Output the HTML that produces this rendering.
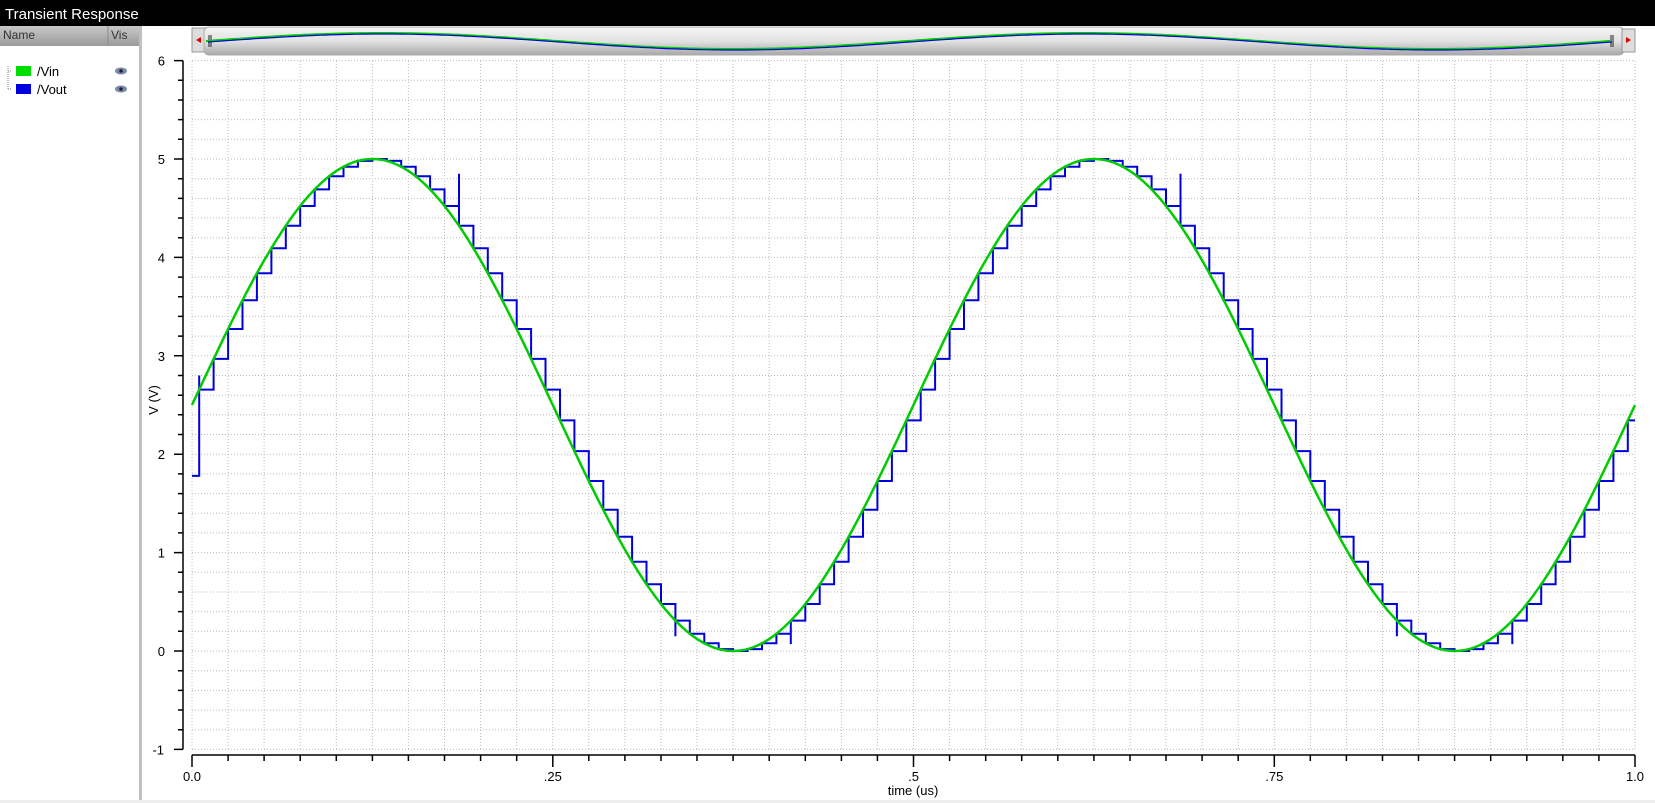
<!DOCTYPE html>
<html><head><meta charset="utf-8"><style>
html,body{margin:0;padding:0;background:#fff;overflow:hidden}
svg{display:block}
text{font-family:"Liberation Sans",sans-serif}
</style></head><body>
<svg id="s" width="1655" height="803" viewBox="0 0 1655 803" xmlns="http://www.w3.org/2000/svg">
<defs>
<linearGradient id="hg" x1="0" y1="0" x2="0" y2="1"><stop offset="0" stop-color="#c8c8c8"/><stop offset="1" stop-color="#9a9a9a"/></linearGradient>
<linearGradient id="sb" x1="0" y1="0" x2="0" y2="1"><stop offset="0" stop-color="#f4f4f4"/><stop offset="0.5" stop-color="#e2e2e2"/><stop offset="1" stop-color="#a8a8a8"/></linearGradient>
</defs>
<rect width="1655" height="803" fill="#fff"/>
<rect width="1655" height="26" fill="#000"/>
<text x="5" y="19" fill="#fff" font-size="15">Transient Response</text>
<!-- left panel -->
<rect x="0" y="26" width="139" height="20" fill="url(#hg)"/>
<line x1="108" y1="26" x2="108" y2="46" stroke="#888"/>
<text x="3" y="39" font-size="12" fill="#333">Name</text>
<text x="111" y="39" font-size="12" fill="#333">Vis</text>
<rect x="139" y="26" width="3" height="774" fill="#c0c0c0"/>
<path d="M8 66 V89 M8 71 H12 M8 89 H12" stroke="#888" stroke-dasharray="1,1" fill="none"/>
<rect x="16" y="66" width="15" height="10" fill="#00dd00"/>
<rect x="16" y="84" width="15" height="10" fill="#0000dd"/>
<text x="37" y="76" font-size="13">/Vin</text>
<text x="37" y="94" font-size="13">/Vout</text>
<g fill="#7a8aa8"><ellipse cx="121" cy="71" rx="6" ry="3.5"/><ellipse cx="121" cy="89" rx="6" ry="3.5"/></g>
<g fill="#223"><circle cx="121" cy="71" r="1.8"/><circle cx="121" cy="89" r="1.8"/></g>
<rect x="0" y="800" width="1655" height="3" fill="#eee"/>
<!-- scrollbar -->
<rect x="192" y="28" width="14" height="24" fill="#ddd" stroke="#999"/>
<path d="M196 40 L201 37 L201 43 Z" fill="#d00"/>
<rect x="204" y="27" width="1420" height="28" rx="5" fill="url(#sb)" stroke="#aaa"/>
<rect x="1622" y="29" width="13" height="23" fill="#ddd" stroke="#999"/>
<path d="M1631 40 L1626 37 L1626 43 Z" fill="#d00"/>
<path d="M209 35 V47 M211 35 V47 M1611 35 V47 M1613 35 V47" stroke="#222"/>
<g id="mini"></g>
<!-- grid -->
<g id="grid" stroke="#bbb" stroke-dasharray="1,2"></g>
<!-- axes -->
<g id="ax" stroke="#000" stroke-width="1.5" fill="none"></g>
<g id="lab" font-size="13"></g>
<text x="913" y="795" font-size="13" text-anchor="middle">time (us)</text>
<text transform="translate(158,400) rotate(-90)" font-size="13" text-anchor="middle">V (V)</text>
<path id="vout" fill="none" stroke="#0000dd" stroke-width="2"/>
<path id="vin" fill="none" stroke="#00cc00" stroke-width="2.5"/>
</svg>
<script>
var X0=192,X1=1635,Y0=651,PV=98.4;
function X(t){return X0+(X1-X0)*t}
function Y(v){return Y0-PV*v}
function vin(t){return 2.5+2.5*Math.sin(2*Math.PI*2*t)}
var g='',i;
for(i=0;i<=40;i++){var x=X(i/40).toFixed(1);g+='<line x1="'+x+'" y1="61" x2="'+x+'" y2="750"/>';}
for(i=0;i<=35;i++){var y=Y(-1+i*0.2).toFixed(1);g+='<line x1="192" y1="'+y+'" x2="1635" y2="'+y+'"/>';}
document.getElementById('grid').innerHTML=g;
var a='M183 '+Y(6)+' V'+Y(-1)+' M192 755 H1635 ';
for(i=0;i<=35;i++){var v=-1+i*0.2;var maj=Math.abs(v-Math.round(v))<1e-6;a+='M'+(maj?174:178)+' '+Y(v).toFixed(1)+' H183 ';}
for(i=0;i<=40;i++){var maj=i%10==0;a+='M'+X(i/40).toFixed(1)+' 755 V'+(maj?767:761)+' ';}
document.getElementById('ax').setAttribute('d',a);
document.getElementById('ax').innerHTML='<path d="'+a+'"/>';
var l='';
for(i=-1;i<=6;i++)l+='<text x="'+(i<0?164:165)+'" y="'+(Y(i)+5).toFixed(1)+'" text-anchor="end">'+i+'</text>';
var xl=['0.0','.25','.5','.75','1.0'];
for(i=0;i<5;i++)l+='<text x="'+X(i/4).toFixed(1)+'" y="781" text-anchor="middle">'+xl[i]+'</text>';
document.getElementById('lab').innerHTML=l;
var p='M'+X(0)+' '+Y(vin(0));
for(i=1;i<=600;i++){var t=i/600;p+=' L'+X(t).toFixed(1)+' '+Y(vin(t)).toFixed(1);}
document.getElementById('vin').setAttribute('d',p);
var spikes={18:4.85,33:0.15,41:0.07,68:4.85,83:0.15,91:0.07};
var q='M'+X(0)+' '+Y(1.78)+' H'+X(0.005).toFixed(1)+' V'+Y(2.8).toFixed(1);
var prev=vin(0.005);q+=' V'+Y(prev).toFixed(1);
for(i=1;i<100;i++){var t=0.005+i*0.01,v=vin(t),x=X(t).toFixed(1);q+=' H'+x;
if(spikes[i]!==undefined){q+=' V'+Y(spikes[i]).toFixed(1);}
q+=' V'+Y(v).toFixed(1);}
q+=' H'+X(1);
document.getElementById('vout').setAttribute('d',q);
// mini preview
var m='M206 '+(41-9*Math.sin(0))+'',mm='';
var pts=[];for(i=0;i<=300;i++){var t=i/300;pts.push((206+(1610-206)*t).toFixed(1)+' '+(41-8*Math.sin(4*Math.PI*t)).toFixed(1));}
document.getElementById('mini').innerHTML='<path d="M'+pts.join(' L')+'" fill="none" stroke="#00cc00" stroke-width="2"/><path d="M'+pts.join(' L')+'" fill="none" stroke="#0000dd" stroke-width="1.2" transform="translate(2,1)"/>';
</script>
</body></html>
